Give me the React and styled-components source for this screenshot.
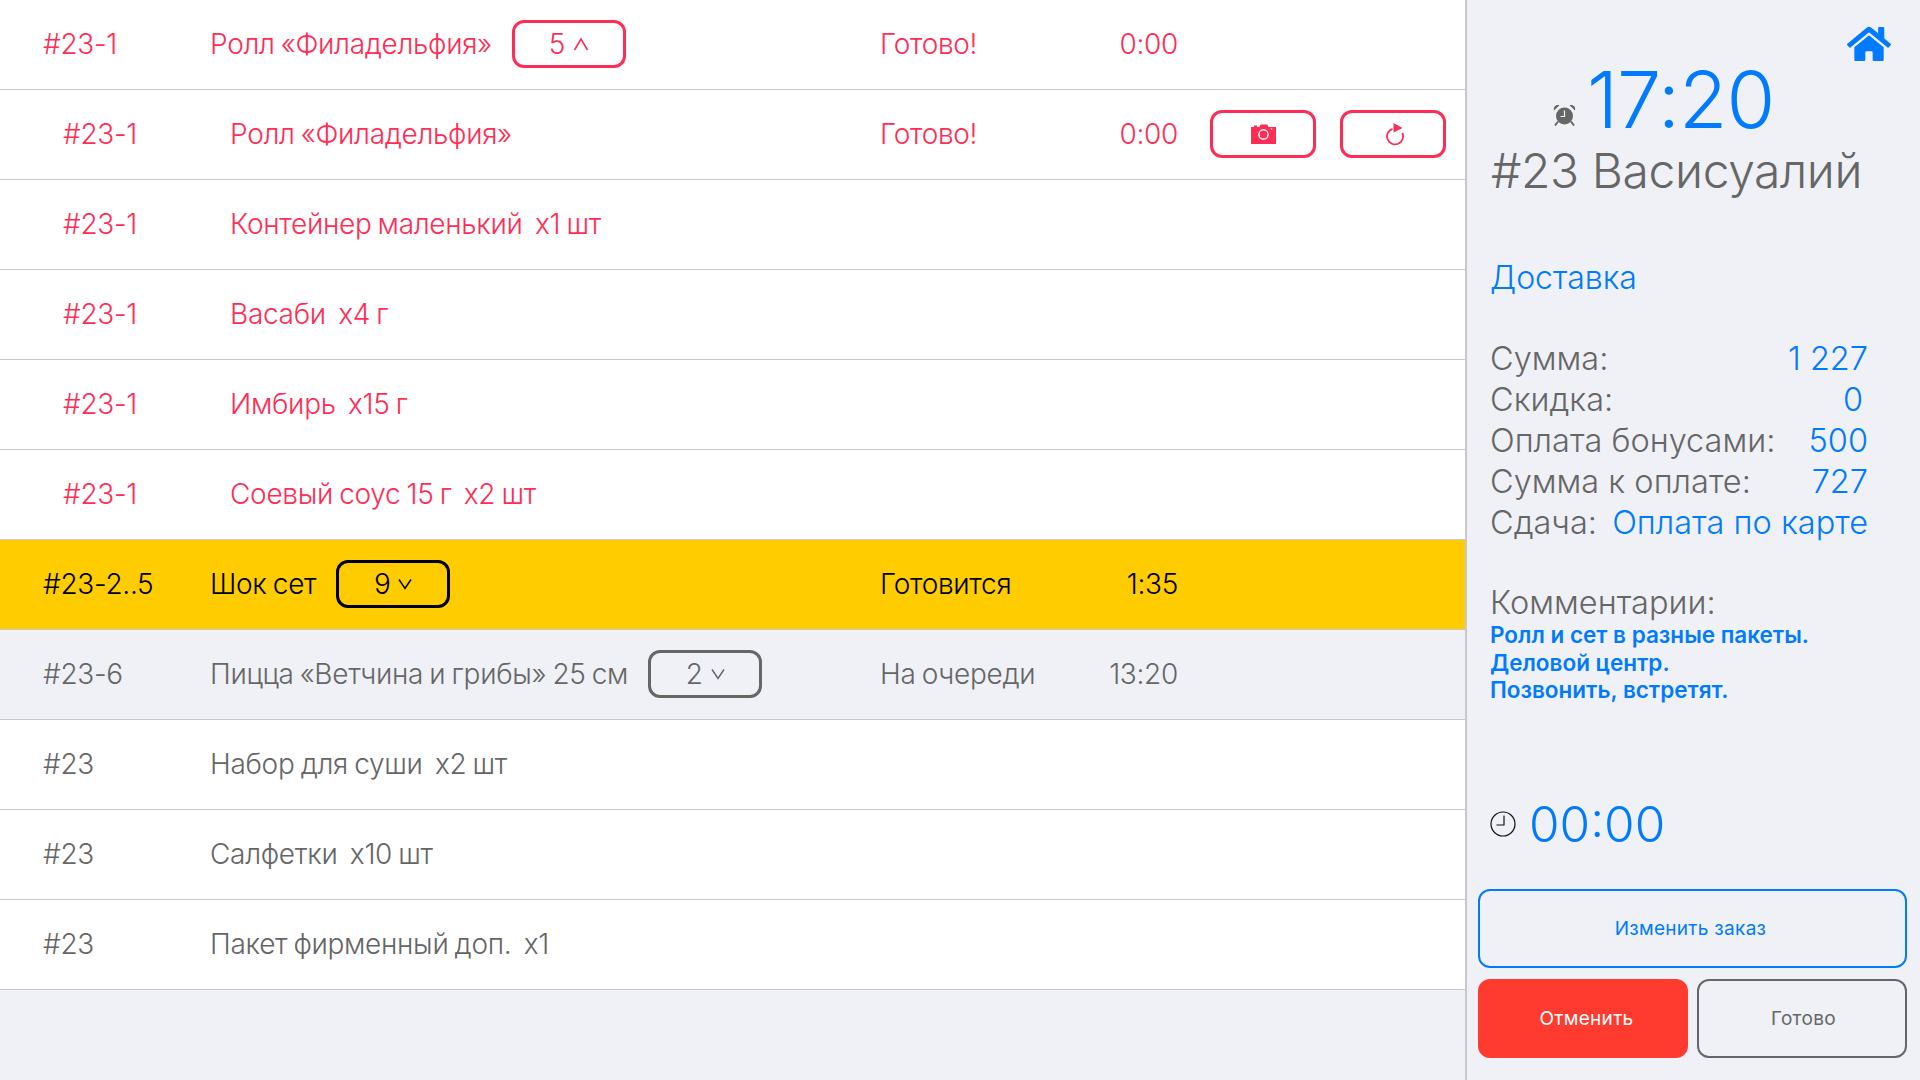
import React from "react";
import styled, { createGlobalStyle } from "styled-components";
import { FaHome } from "react-icons/fa";

const PINK = "#ff2d55";
const BLUE = "#007aff";
const GRAY = "#666666";
const BG = "#f0f1f6";

const GlobalStyle = createGlobalStyle`
  html, body {
    margin: 0;
    padding: 0;
    background: ${BG};
    font-family: Inter, "Liberation Sans", sans-serif;
  }
  * { box-sizing: border-box; }
`;

const Page = styled.div`
  display: flex;
  width: 1920px;
  height: 1080px;
  overflow: hidden;
`;
const List = styled.div`
  width: 1465px;
  flex-shrink: 0;
`;
const Row = styled.div`
  display: grid;
  grid-template-columns: 167px ${(p) => 670 - p.$indent}px 171px 127px auto;
  align-items: center;
  height: 90px;
  padding-left: ${(p) => 43 + p.$indent}px;
  padding-bottom: 1px;
  border-bottom: 1px solid #c8c7cc;
  background: ${(p) => p.$bg};
  color: ${(p) => p.$color};
  font-size: 28px;
  font-weight: 300;
  letter-spacing: -0.3px;
  word-spacing: -1.4px;
  white-space: pre;
`;
const NameCell = styled.div`
  display: flex;
  align-items: center;
  gap: 20px;
`;
const Time = styled.div`
  text-align: right;
`;
const Actions = styled.div`
  display: flex;
  gap: 24px;
  margin-left: 32px;
`;
const Pill = styled.div`
  display: flex;
  align-items: center;
  justify-content: center;
  gap: 8px;
  width: 114px;
  height: 48px;
  border: 3px solid currentColor;
  border-radius: 12px;
`;
const IconButton = styled.div`
  display: flex;
  align-items: center;
  justify-content: center;
  width: 106px;
  height: 48px;
  padding-left: ${(p) => p.$shift || 0}px;
  border: 3px solid ${PINK};
  border-radius: 12px;
  color: ${PINK};
`;
const Panel = styled.aside`
  position: relative;
  flex: 1;
  border-left: 2px solid #c8c7cc;
  padding: 0 13px 0 11px;
  color: ${GRAY};
`;
const HomeLink = styled.div`
  position: absolute;
  top: 22px;
  right: 29px;
  color: ${BLUE};
  line-height: 0;
`;
const ClockRow = styled.div`
  display: flex;
  align-items: flex-end;
  gap: 11px;
  padding-left: 75px;
  height: 140px;
`;
const BigTime = styled.div`
  color: ${BLUE};
  font-size: 79px;
  font-weight: 300;
  line-height: 90px;
  letter-spacing: -1px;
  margin-bottom: -4px;
`;
const AlarmWrap = styled.div`
  line-height: 0;
  margin-bottom: 14px;
`;
const Customer = styled.div`
  margin: 2px 0 0 13px;
  font-size: 48px;
  font-weight: 300;
  line-height: 58px;
  letter-spacing: -0.4px;
`;
const Delivery = styled.div`
  margin: 56px 0 0 12px;
  color: ${BLUE};
  font-size: 32px;
  font-weight: 300;
  line-height: 44px;
`;
const Summary = styled.div`
  margin: 38px 0 0 12px;
  width: 378px;
  font-size: 32.5px;
  font-weight: 300;
`;
const SummaryRow = styled.div`
  display: flex;
  justify-content: space-between;
  line-height: 41px;
`;
const Value = styled.span`
  color: ${BLUE};
  padding-right: ${(p) => p.$pad || 0}px;
`;
const CommentsTitle = styled.div`
  margin: 41px 0 0 12px;
  font-size: 32.5px;
  font-weight: 300;
  line-height: 37px;
`;
const Comments = styled.div`
  margin-left: 12px;
  color: ${BLUE};
  font-size: 22.5px;
  font-weight: 600;
  line-height: 27.5px;
`;
const TimerRow = styled.div`
  display: flex;
  align-items: center;
  gap: 13px;
  margin: 90px 0 0 12px;
  height: 60px;
`;
const Timer = styled.div`
  color: ${BLUE};
  font-size: 49.5px;
  font-weight: 300;
`;
const ClockWrap = styled.div`
  line-height: 0;
`;
const WideButton = styled.div`
  display: flex;
  align-items: center;
  justify-content: center;
  margin-top: 35px;
  padding-right: 4px;
  height: 79px;
  border: 2px solid ${BLUE};
  border-radius: 12px;
  color: ${BLUE};
  font-size: 19px;
  letter-spacing: 0.3px;
`;
const ButtonRow = styled.div`
  display: grid;
  grid-template-columns: 210px 210px;
  gap: 9px;
  margin-top: 11px;
`;
const CancelButton = styled.div`
  display: flex;
  align-items: center;
  justify-content: center;
  padding-left: 7px;
  height: 79px;
  background: #ff3b30;
  border-radius: 12px;
  color: #ffffff;
  font-size: 19px;
  letter-spacing: 0.3px;
`;
const DoneButton = styled.div`
  display: flex;
  align-items: center;
  justify-content: center;
  padding-left: 3px;
  height: 79px;
  border: 2px solid ${GRAY};
  border-radius: 12px;
  color: ${GRAY};
  font-size: 19px;
  letter-spacing: 0.3px;
`;

const CaretUp = () => (
  <svg width="16" height="14" viewBox="0 0 16 14" fill="none" stroke="currentColor" strokeWidth="1.6">
    <path d="M1.5 13 L8 2 L14.5 13" />
  </svg>
);
const CaretDown = () => (
  <svg width="14" height="12" viewBox="0 0 14 12" fill="none" stroke="currentColor" strokeWidth="1.5">
    <path d="M1 1.5 L7 10.5 L13 1.5" />
  </svg>
);
const CameraIcon = () => (
  <svg width="25" height="20" viewBox="0 0 25 20">
    <path fill="currentColor" d="M0 3h3V1.6h3V3h2.400l1-2.600h7l1 2.600H25v17H0z" />
    <circle cx="12.500" cy="10.400" r="4.600" fill="currentColor" stroke="#ffffff" strokeWidth="1.400" />
    <circle cx="20.500" cy="5" r="0.800" fill="#ffffff" />
  </svg>
);
const RefreshIcon = () => (
  <svg width="20" height="24" viewBox="0 0 20 24">
    <path d="M7.500 6.800a8 8 0 1 0 9.800 4.200" fill="none" stroke="currentColor" strokeWidth="1.800" />
    <path d="M8.500 1 L17.500 6 L8.500 10.500z" fill="currentColor" />
  </svg>
);
const AlarmIcon = () => (
  <svg width="23" height="22" viewBox="0 0 23 22" fill={GRAY}>
    <circle cx="11.500" cy="12" r="8.500" />
    <path d="M1 6.500 C0 2.500 3 0 6.500 1.200z M22 6.500 C23 2.500 20 0 16.500 1.200z" />
    <path d="M5 17.500 L2 21.500 M18 17.500 L21 21.500" stroke={GRAY} strokeWidth="2" />
    <path d="M11.500 6.500 V12.500 H7.500" fill="none" stroke={BG} strokeWidth="1.200" />
  </svg>
);
const ClockIcon = () => (
  <svg width="26" height="26" viewBox="0 0 26 26" fill="none" stroke="#111111" strokeWidth="1.200">
    <circle cx="13" cy="13" r="12" />
    <path d="M14 4.500 V14 H6.500" />
  </svg>
);

const rows = [
  { id: "#23-1", name: "Ролл «Филадельфия»", kind: "pink", pill: "5", up: true, status: "Готово!", time: "0:00" },
  { id: "#23-1", name: "Ролл «Филадельфия»", kind: "pink", indent: 20, status: "Готово!", time: "0:00", actions: true },
  { id: "#23-1", name: "Контейнер маленький  x1 шт", kind: "pink", indent: 20 },
  { id: "#23-1", name: "Васаби  x4 г", kind: "pink", indent: 20 },
  { id: "#23-1", name: "Имбирь  x15 г", kind: "pink", indent: 20 },
  { id: "#23-1", name: "Соевый соус 15 г  x2 шт", kind: "pink", indent: 20 },
  { id: "#23-2..5", name: "Шок сет", kind: "cooking", pill: "9", status: "Готовится", time: "1:35" },
  { id: "#23-6", name: "Пицца «Ветчина и грибы» 25 см", kind: "queue", pill: "2", status: "На очереди", time: "13:20" },
  { id: "#23", name: "Набор для суши  x2 шт", kind: "plain" },
  { id: "#23", name: "Салфетки  x10 шт", kind: "plain" },
  { id: "#23", name: "Пакет фирменный доп.  x1", kind: "plain" },
];

const kinds = {
  pink: { bg: "#ffffff", color: PINK },
  cooking: { bg: "#ffcc00", color: "#000000" },
  queue: { bg: BG, color: GRAY },
  plain: { bg: "#ffffff", color: GRAY },
};

const summary = [
  { label: "Сумма:", value: "1 227" },
  { label: "Скидка:", value: "0", pad: 5 },
  { label: "Оплата бонусами:", value: "500" },
  { label: "Сумма к оплате:", value: "727" },
  { label: "Сдача:", value: "Оплата по карте" },
];

export default function App() {
  return (
    <Page>
      <GlobalStyle />
      <List>
        {rows.map((r, i) => (
          <Row key={i} $indent={r.indent || 0} $bg={kinds[r.kind].bg} $color={kinds[r.kind].color}>
            <div>{r.id}</div>
            <NameCell>
              <span>{r.name}</span>
              {r.pill && (
                <Pill>
                  {r.pill}
                  {r.up ? <CaretUp /> : <CaretDown />}
                </Pill>
              )}
            </NameCell>
            <div>{r.status}</div>
            <Time>{r.time}</Time>
            {r.actions && (
              <Actions>
                <IconButton>
                  <CameraIcon />
                </IconButton>
                <IconButton $shift={4}>
                  <RefreshIcon />
                </IconButton>
              </Actions>
            )}
          </Row>
        ))}
      </List>
      <Panel>
        <HomeLink>
          <FaHome size={44} />
        </HomeLink>
        <ClockRow>
          <AlarmWrap>
            <AlarmIcon />
          </AlarmWrap>
          <BigTime>17:20</BigTime>
        </ClockRow>
        <Customer>#23 Васисуалий</Customer>
        <Delivery>Доставка</Delivery>
        <Summary>
          {summary.map((s) => (
            <SummaryRow key={s.label}>
              <span>{s.label}</span>
              <Value $pad={s.pad}>{s.value}</Value>
            </SummaryRow>
          ))}
        </Summary>
        <CommentsTitle>Комментарии:</CommentsTitle>
        <Comments>
          Ролл и сет в разные пакеты.
          <br />
          Деловой центр.
          <br />
          Позвонить, встретят.
        </Comments>
        <TimerRow>
          <ClockWrap>
            <ClockIcon />
          </ClockWrap>
          <Timer>00:00</Timer>
        </TimerRow>
        <WideButton>Изменить заказ</WideButton>
        <ButtonRow>
          <CancelButton>Отменить</CancelButton>
          <DoneButton>Готово</DoneButton>
        </ButtonRow>
      </Panel>
    </Page>
  );
}
